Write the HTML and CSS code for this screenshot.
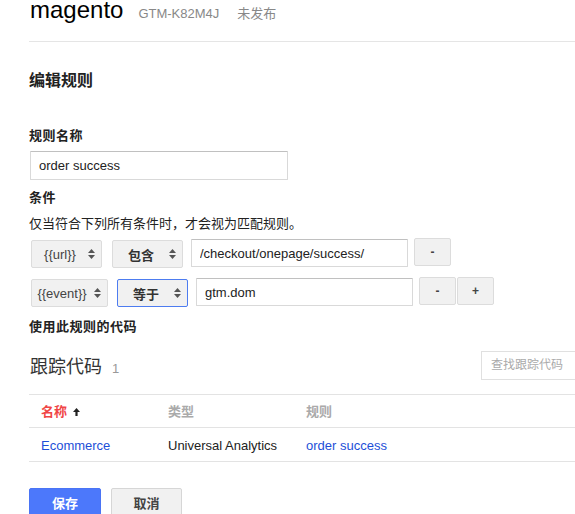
FILE: index.html
```html
<!DOCTYPE html>
<html lang="zh-CN">
<head>
<meta charset="utf-8">
<title>magento - 编辑规则</title>
<link rel="stylesheet" href="styles.css">
</head>
<body>
<div class="page">
  <header class="topbar">
    <div class="brand-row">
      <span class="brand">magento</span>
      <span class="container-id">GTM-K82M4J</span>
      <span class="status">未发布</span>
    </div>
  </header>

  <main class="content">
    <h1 class="title">编辑规则</h1>

    <div class="label label-name">规则名称</div>
    <input class="text-input name-input" type="text" value="order success">

    <div class="label label-cond">条件</div>
    <p class="desc">仅当符合下列所有条件时，才会视为匹配规则。</p>

    <div class="cond-row">
      <div class="select sel-var sel-url"><span class="sel-text">{{url}}</span><svg class="updown" width="7" height="12" viewBox="0 0 7 12"><path d="M0 5 L3.5 1 L7 5 Z M0 7 L3.5 11 L7 7 Z"/></svg></div>
      <div class="select sel-op sel-op1"><span class="sel-text cjk">包含</span><svg class="updown" width="7" height="12" viewBox="0 0 7 12"><path d="M0 5 L3.5 1 L7 5 Z M0 7 L3.5 11 L7 7 Z"/></svg></div>
      <input class="text-input cond-input" type="text" value="/checkout/onepage/success/">
      <button class="btn-small">-</button>
    </div>

    <div class="cond-row cond-row2">
      <div class="select sel-var sel-event"><span class="sel-text">{{event}}</span><svg class="updown" width="7" height="12" viewBox="0 0 7 12"><path d="M0 5 L3.5 1 L7 5 Z M0 7 L3.5 11 L7 7 Z"/></svg></div>
      <div class="select sel-op sel-focus"><span class="sel-text cjk">等于</span><svg class="updown" width="7" height="12" viewBox="0 0 7 12"><path d="M0 5 L3.5 1 L7 5 Z M0 7 L3.5 11 L7 7 Z"/></svg></div>
      <input class="text-input cond-input" type="text" value="gtm.dom">
      <button class="btn-small">-</button>
      <button class="btn-small btn-plus">+</button>
    </div>

    <div class="label label-tags">使用此规则的代码</div>

    <div class="tags-head">
      <div class="tags-title">跟踪代码<span class="tags-count">1</span></div>
      <div class="search-box">查找跟踪代码</div>
    </div>

    <div class="table">
      <div class="tr th">
        <div class="cell sort-col">名称<svg class="sort-arrow" width="7" height="8" viewBox="0 0 7 8"><path d="M3.5 0 L7 4 L4.6 4 L4.6 8 L2.4 8 L2.4 4 L0 4 Z"/></svg></div>
        <div class="cell">类型</div>
        <div class="cell">规则</div>
      </div>
      <div class="tr td">
        <div class="cell"><a class="link" href="#">Ecommerce</a></div>
        <div class="cell">Universal Analytics</div>
        <div class="cell"><a class="link" href="#">order success</a></div>
      </div>
    </div>

    <div class="actions">
      <button class="btn btn-primary">保存</button>
      <button class="btn btn-default">取消</button>
    </div>
  </main>
</div>
</body>
</html>
```

FILE: styles.css
```css
html, body {
  margin: 0;
  padding: 0;
  overflow: hidden;
  background: #fff;
}

body {
  font-family: "Liberation Sans", Arial, "Noto Sans CJK SC", sans-serif;
  font-size: 13px;
  color: #222;
}

.page {
  width: 620px;
  padding-left: 29px;
  box-sizing: border-box;
}

/* ---------- top bar ---------- */
.topbar {
  display: flex;
  align-items: flex-start;
  height: 41px;
  border-bottom: 1px solid #e5e5e5;
}

.brand-row {
  display: flex;
  align-items: baseline;
  margin-top: -2px;
  padding-left: 1px;
}

.brand {
  font-size: 24px;
  line-height: 24px;
  color: #000;
}

.container-id {
  margin-left: 15px;
  font-size: 13px;
  color: #888;
}

.status {
  margin-left: 18px;
  font-size: 13px;
  color: #888;
}

/* ---------- form ---------- */
.title {
  margin: 29px 0 0;
  font-size: 16px;
  line-height: 20px;
  font-weight: bold;
  color: #222;
}

.label {
  font-size: 13px;
  line-height: 16px;
  font-weight: bold;
  letter-spacing: 0.5px;
  color: #222;
}

.label-name { margin-top: 37px; }
.label-cond { margin-top: 10px; }
.label-tags { margin-top: 12px; }

.text-input {
  display: block;
  box-sizing: border-box;
  height: 28px;
  margin: 0;
  padding: 0 8px;
  border: 1px solid #d9d9d9;
  border-top-color: #c0c0c0;
  border-radius: 1px;
  background: #fff;
  font-family: "Liberation Sans", Arial, "Noto Sans CJK SC", sans-serif;
  font-size: 13px;
  color: #222;
  outline: none;
}

.name-input {
  width: 258px;
  height: 29px;
  margin-top: 7px;
  margin-left: 1px;
}

.desc {
  margin: 10px 0 0;
  font-size: 13px;
  line-height: 16px;
  color: #222;
}

.cond-row {
  display: flex;
  align-items: flex-start;
  height: 30px;
  margin-top: 6px;
  padding-left: 2px;
}

.cond-row2 { margin-top: 9px; }

.select {
  display: flex;
  align-items: center;
  box-sizing: border-box;
  height: 28px;
  margin-top: 2px;
  padding: 0 6px 0 4px;
  border: 1px solid #dcdcdc;
  border-radius: 2px;
  background: #f1f1f1;
  color: #444;
}

.sel-text {
  flex: 1;
  text-align: center;
  font-size: 13px;
  white-space: nowrap;
}

.sel-text.cjk {
  font-weight: bold;
  color: #333;
}

.updown {
  flex: none;
  fill: #555;
  margin-left: 4px;
}

.sel-url { width: 71px; margin-right: 10px; }
.sel-event { width: 77px; margin-right: 9px; padding-left: 2px; }
.sel-op { width: 71px; margin-right: 8px; }
.sel-focus { border-color: #4d7cf0; }

.cond-input {
  width: 217px;
  margin-top: 1px;
  margin-right: 6px;
}

.btn-small {
  box-sizing: border-box;
  width: 37px;
  height: 28px;
  margin: 0;
  padding: 0;
  border: 1px solid #dcdcdc;
  border-radius: 2px;
  background: #f1f1f1;
  font-family: "Liberation Sans", Arial, sans-serif;
  font-size: 12px;
  font-weight: bold;
  color: #444;
}

.btn-plus { margin-left: 1px; }

/* ---------- tags ---------- */
.tags-head {
  display: flex;
  align-items: flex-start;
  justify-content: space-between;
  margin-top: 16px;
  padding-left: 1px;
}

.tags-title {
  margin-top: 4px;
  font-size: 18px;
  line-height: 24px;
  color: #333;
}

.tags-count {
  margin-left: 10px;
  font-size: 13px;
  color: #999;
}

.search-box {
  box-sizing: border-box;
  width: 139px;
  height: 29px;
  padding: 0 9px;
  border: 1px solid #e0e0e0;
  font-size: 12px;
  line-height: 27px;
  color: #aaa;
}

.table {
  margin-top: 13px;
  border-top: 1px solid #e3e3e3;
}

.tr {
  display: grid;
  grid-template-columns: 127px 138px 1fr;
  border-bottom: 1px solid #e3e3e3;
}

.cell {
  padding-left: 12px;
  line-height: 16px;
  white-space: nowrap;
}

.th .cell {
  padding-top: 9px;
  padding-bottom: 7px;
  font-weight: bold;
  color: #aaa;
}

.th .sort-col {
  color: #f04545;
  display: flex;
  align-items: center;
}

.sort-arrow {
  margin-left: 6px;
  fill: #222;
}

.td .cell {
  padding-top: 10px;
  padding-bottom: 7px;
  color: #222;
}

.link {
  color: #1d4fd8;
  text-decoration: none;
}

/* ---------- actions ---------- */
.actions {
  display: flex;
  gap: 10px;
  margin-top: 26px;
}

.btn {
  box-sizing: border-box;
  width: 72px;
  height: 29px;
  margin: 0;
  padding: 0;
  border-radius: 2px;
  font-family: "Liberation Sans", Arial, "Noto Sans CJK SC", sans-serif;
  font-size: 13px;
  font-weight: bold;
}

.btn-primary {
  border: 1px solid #4a74f5;
  background: #4c78fb;
  color: #fff;
}

.btn-default {
  width: 71px;
  border: 1px solid #d6d6d6;
  background: #f1f1f1;
  color: #444;
}
```
